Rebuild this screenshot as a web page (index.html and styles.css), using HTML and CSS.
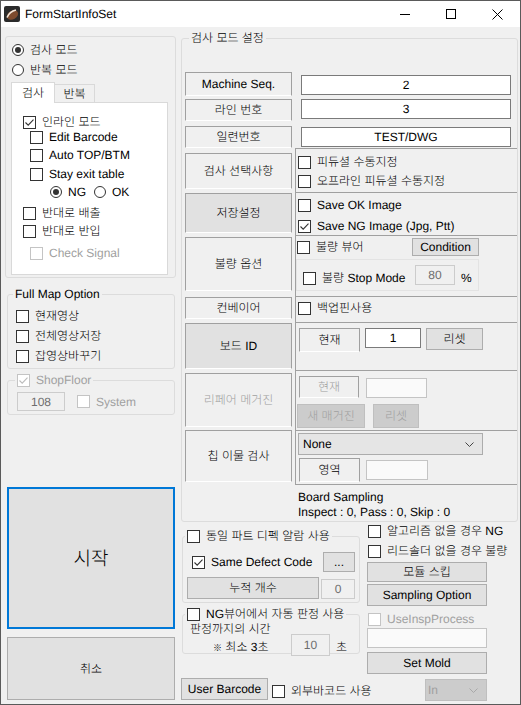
FILE: index.html
```html
<!DOCTYPE html>
<html lang="ko">
<head>
<meta charset="utf-8">
<title>FormStartInfoSet</title>
<link rel="stylesheet" href="styles.css">
</head>
<body>
<div class="window">
  <div class="titlebar">
    <svg class="appicon" viewBox="0 0 16 16"><rect x="0" y="0" width="16" height="16" rx="2" fill="#2b2b2b"/><ellipse cx="8.5" cy="9" rx="6" ry="4.3" fill="#7d4b2e" transform="rotate(-30 8.5 9)"/><path d="M3 11.5 Q5.5 5.5 12 4" stroke="#f3e7da" stroke-width="1.6" fill="none"/></svg>
    <span class="title">FormStartInfoSet</span>
    <div class="winctl">
      <span class="wbtn"><svg width="10" height="10" viewBox="0 0 10 10"><path d="M0 5.5H10" stroke="#000" stroke-width="1"/></svg></span>
      <span class="wbtn"><svg width="10" height="10" viewBox="0 0 10 10"><rect x="0.5" y="0.5" width="9" height="9" fill="none" stroke="#000" stroke-width="1"/></svg></span>
      <span class="wbtn"><svg width="11" height="11" viewBox="0 0 11 11"><path d="M0.5 0.5L10.5 10.5M10.5 0.5L0.5 10.5" stroke="#000" stroke-width="1"/></svg></span>
    </div>
  </div>

  <div class="client">
    <!-- LEFT COLUMN -->
    <div class="leftcol">
      <div class="modepanel">
        <div class="rd moderow first"><span class="circ on"></span><span>검사 모드</span></div>
        <div class="rd moderow"><span class="circ"></span><span>반복 모드</span></div>
        <div class="tabs">
          <div class="tab active">검사</div>
          <div class="tab">반복</div>
        </div>
        <div class="tabpage">
          <div class="cb tp-inline"><span class="box"><svg viewBox="0 0 11 11"><path d="M1.5 5.5L4.2 8.2L9.5 2.6" fill="none" stroke="#333" stroke-width="1.1"/></svg></span><span>인라인 모드</span></div>
          <div class="cb tp-edit"><span class="box"></span><span>Edit Barcode</span></div>
          <div class="cb tp-auto"><span class="box"></span><span>Auto TOP/BTM</span></div>
          <div class="cb tp-stay"><span class="box"></span><span>Stay exit table</span></div>
          <div class="tp-ngok">
            <div class="rd"><span class="circ on"></span><span>NG</span></div>
            <div class="rd ok"><span class="circ"></span><span>OK</span></div>
          </div>
          <div class="cb tp-out"><span class="box"></span><span>반대로 배출</span></div>
          <div class="cb tp-in"><span class="box"></span><span>반대로 반입</span></div>
          <div class="cb dis tp-sig"><span class="box"></span><span>Check Signal</span></div>
        </div>
      </div>

      <fieldset class="gb fullmap">
        <legend>Full Map Option</legend>
        <div class="cb fm fm1"><span class="box"></span><span>현재영상</span></div>
        <div class="cb fm fm2"><span class="box"></span><span>전체영상저장</span></div>
        <div class="cb fm fm2"><span class="box"></span><span>잡영상바꾸기</span></div>
      </fieldset>

      <fieldset class="gb shop">
        <legend><span class="cb dis"><span class="box"><svg viewBox="0 0 11 11"><path d="M1.5 5.5L4.2 8.2L9.5 2.6" fill="none" stroke="#bcbcbc" stroke-width="1.1"/></svg></span><span>ShopFloor</span></span></legend>
        <div class="shoprow">
          <div class="tb dis shoptb">108</div>
          <div class="cb dis systemcb"><span class="box"></span><span>System</span></div>
        </div>
      </fieldset>

      <div class="btn start">시작</div>
      <div class="btn cancel">취소</div>
    </div>

    <!-- RIGHT COLUMN -->
    <div class="rightcol">
      <fieldset class="gb main">
        <legend>검사 모드 설정</legend>

        <div class="trow r1">
          <div class="lbl l1">Machine Seq.</div>
          <div class="vplain"><div class="tb vtb v1">2</div></div>
        </div>
        <div class="trow r2">
          <div class="lbl l2">라인 번호</div>
          <div class="vplain"><div class="tb vtb v2">3</div></div>
        </div>
        <div class="trow r3">
          <div class="lbl l3">일련번호</div>
          <div class="vplain"><div class="tb vtb v3">TEST/DWG</div></div>
        </div>

        <div class="trow r4">
          <div class="lbl l4">검사 선택사항</div>
          <div class="vc">
            <div class="cb vcb r4a"><span class="box"></span><span>피듀셜 수동지정</span></div>
            <div class="cb vcb r4b"><span class="box"></span><span>오프라인 피듀셜 수동지정</span></div>
          </div>
        </div>

        <div class="trow r5">
          <div class="lbl raised l5">저장설정</div>
          <div class="vc">
            <div class="cb vcb r5a"><span class="box"></span><span>Save OK Image</span></div>
            <div class="cb vcb r5b"><span class="box"><svg viewBox="0 0 11 11"><path d="M1.5 5.5L4.2 8.2L9.5 2.6" fill="none" stroke="#333" stroke-width="1.1"/></svg></span><span>Save NG Image (Jpg, Ptt)</span></div>
          </div>
        </div>

        <div class="trow r6">
          <div class="lbl l6">불량 옵션</div>
          <div class="vc">
            <div class="r6top">
              <div class="cb"><span class="box"></span><span>불량 뷰어</span></div>
              <div class="btn cond">Condition</div>
            </div>
            <div class="stoppanel">
              <div class="cb stopcb"><span class="box"></span><span>불량 Stop Mode</span></div>
              <div class="tb dis pcttb">80</div>
              <span class="pct">%</span>
            </div>
          </div>
        </div>

        <div class="trow r7">
          <div class="lbl l7">컨베이어</div>
          <div class="vc">
            <div class="cb vcb r7a"><span class="box"></span><span>백업핀사용</span></div>
          </div>
        </div>

        <div class="trow r8">
          <div class="lbl raised l8">보드 ID</div>
          <div class="vc">
            <div class="r8row">
              <div class="lbl curlbl">현재</div>
              <div class="tb curtb">1</div>
              <div class="btn resetbtn">리셋</div>
            </div>
          </div>
        </div>

        <div class="trow r9">
          <div class="lbl dis l9">리페어 메거진</div>
          <div class="vc">
            <div class="r9row1">
              <div class="lbl dis mcurlbl">현재</div>
              <div class="tb empty mcurtb"></div>
            </div>
            <div class="r9row2">
              <div class="btn dis newmag">새 매거진</div>
              <div class="btn dis mreset">리셋</div>
            </div>
          </div>
        </div>

        <div class="trow r10">
          <div class="lbl l10">칩 이물 검사</div>
          <div class="vc">
            <div class="dd nonedd"><span>None</span><svg width="9" height="5" viewBox="0 0 9 5"><path d="M0.5 0.5L4.5 4.5L8.5 0.5" fill="none" stroke="#444" stroke-width="1"/></svg></div>
            <div class="r10row">
              <div class="lbl arealbl">영역</div>
              <div class="tb empty areatb"></div>
            </div>
          </div>
        </div>

        <div class="trow r11">
          <div></div>
          <div class="vsample">Board Sampling<br>Inspect : 0, Pass : 0, Skip : 0</div>
        </div>
      </fieldset>

      <div class="bottom">
        <div class="lsub">
          <fieldset class="gb fs-same">
            <legend><span class="cb"><span class="box"></span><span>동일 파트 디펙 알람 사용</span></span></legend>
            <div class="sdrow">
              <div class="cb sdcb"><span class="box"><svg viewBox="0 0 11 11"><path d="M1.5 5.5L4.2 8.2L9.5 2.6" fill="none" stroke="#333" stroke-width="1.1"/></svg></span><span>Same Defect Code</span></div>
              <div class="btn dots">...</div>
            </div>
            <div class="accrow">
              <div class="btn accbtn">누적 개수</div>
              <div class="tb dis acctb">0</div>
            </div>
          </fieldset>
          <fieldset class="gb fs-ng">
            <legend><span class="cb"><span class="box"></span><span>NG뷰어에서 자동 판정 사용</span></span></legend>
            <div class="judgetxt">판정까지의 시간</div>
            <div class="minrow">
              <span class="mintxt"><span class="kome">※</span> 최소 3초</span>
              <div class="tb dis sectb">10</div>
              <span class="sec">초</span>
            </div>
          </fieldset>
        </div>
        <div class="rsub">
          <div class="cb rs-alg"><span class="box"></span><span>알고리즘 없을 경우 NG</span></div>
          <div class="cb rs-lead"><span class="box"></span><span>리드솔더 없을 경우 불량</span></div>
          <div class="btn rs-skip">모듈 스킵</div>
          <div class="btn rs-samp">Sampling Option</div>
          <div class="cb dis rs-use"><span class="box"></span><span>UseInspProcess</span></div>
          <div class="tb empty rs-tb"></div>
          <div class="btn rs-mold">Set Mold</div>
        </div>
      </div>

      <div class="bottomrow">
        <div class="btn ubtn">User Barcode</div>
        <div class="cb extcb"><span class="box"></span><span>외부바코드 사용</span></div>
        <div class="dd dis indd"><span>In</span><svg width="9" height="5" viewBox="0 0 9 5"><path d="M0.5 0.5L4.5 4.5L8.5 0.5" fill="none" stroke="#a8a8a8" stroke-width="1"/></svg></div>
      </div>
    </div>
  </div>
</div>
</body>
</html>
```

FILE: styles.css
```css
* { box-sizing: border-box; }
html, body { margin: 0; padding: 0; }
body {
  width: 521px; height: 705px; overflow: hidden;
  background: #f0f0f0;
  font-family: "Liberation Sans", "Noto Sans CJK KR Light", "Noto Sans CJK KR", sans-serif;
  font-size: 12px; line-height: 14px; color: #000;
  text-rendering: geometricPrecision;
}
.window {
  width: 521px; height: 705px;
  border: 1px solid #5a5a5a;
  display: flex; flex-direction: column;
  background: #f0f0f0; overflow: hidden;
}
.titlebar { flex: none; height: 26px; background: #fff; display: flex; align-items: center; padding-left: 3px; }
.appicon { width: 16px; height: 16px; flex: none; }
.title { margin-left: 5px; }
.winctl { margin-left: auto; display: flex; height: 26px; }
.wbtn { width: 46px; height: 26px; display: flex; align-items: center; justify-content: center; }
.client { flex: 1; display: flex; align-items: flex-start; padding-left: 4px; }
.leftcol { flex: none; width: 171px; display: flex; flex-direction: column; }
.rightcol { flex: none; width: 337px; margin-left: 5px; display: flex; flex-direction: column; }

/* generic controls */
.gb { margin: 0; padding: 0; border: 1px solid #dcdcdc; border-radius: 3px; min-width: 0; flex: none; }
.gb > legend { padding: 0 2px; height: 14px; line-height: 14px; }
.cb { display: flex; align-items: center; height: 14px; white-space: nowrap; }
.box {
  flex: none; width: 13px; height: 13px; border: 1px solid #333; background: #fff;
  margin-right: 6px; display: flex; align-items: center; justify-content: center;
}
.box svg { width: 11px; height: 11px; display: block; }
.cb.dis { color: #a0a0a0; }
.cb.dis .box { border-color: #c4c4c4; }
.rd { display: flex; align-items: center; height: 14px; white-space: nowrap; }
.circ {
  flex: none; width: 12px; height: 12px; border: 1px solid #333; border-radius: 50%;
  background: #fff; margin-right: 6px; display: flex; align-items: center; justify-content: center;
}
.circ.on::after { content: ""; width: 6px; height: 6px; border-radius: 50%; background: #333; }
.btn {
  flex: none; background: #e1e1e1; border: 1px solid #adadad;
  display: flex; align-items: center; justify-content: center; white-space: nowrap;
}
.btn.dis { background: #cccccc; border-color: #bfbfbf; color: #a0a0a0; }
.tb {
  flex: none; background: #fff; border: 1px solid #7a7a7a;
  display: flex; align-items: center; justify-content: center;
}
.tb.dis { background: #f0f0f0; border-color: #cccccc; color: #6d6d6d; }
.tb.empty { background: #fafafa; border-color: #c4c4c4; }
.lbl {
  flex: none; border: 1px solid; border-color: #a0a0a0 #a0a0a0 #ffffff #a0a0a0;
  display: flex; align-items: center; justify-content: center; white-space: nowrap;
}
.lbl.raised { background: #e1e1e1; }
.lbl.dis { color: #a0a0a0; }
.dd {
  flex: none; display: flex; align-items: center; justify-content: space-between;
  background: #e5e5e5; border: 1px solid #acacac; padding: 0 8px 0 4px;
}
.dd.dis { background: #cccccc; border-color: #bfbfbf; color: #a0a0a0; padding: 0 8px 0 2px; }

/* left: mode panel */
.modepanel {
  flex: none; margin-top: 9px; height: 242px; border: 1px solid #dcdcdc; border-radius: 3px;
  display: flex; flex-direction: column;
}
.moderow { height: 20px; padding-left: 6px; }
.moderow.first { margin-top: 3px; }
.tabs { flex: none; display: flex; align-items: flex-end; margin-top: 2px; margin-left: 5px; height: 21px; position: relative; z-index: 1; }
.tab {
  width: 40px; height: 18px; margin-bottom: 1px; background: #f0f0f0;
  border: 1px solid #d9d9d9; border-left: none; border-bottom: none;
  display: flex; align-items: center; justify-content: center;
}
.tab.active { width: 44px; height: 21px; margin-bottom: 0; background: #fff; border-left: 1px solid #d9d9d9; }
.tabpage {
  flex: none; margin-left: 5px; margin-top: -1px; width: 157px; height: 173px;
  border: 1px solid #d9d9d9; background: #fff; display: flex; flex-direction: column;
}
.tp-inline { margin-top: 12px; padding-left: 11px; }
.tp-edit { margin-top: 1px; padding-left: 18px; }
.tp-auto { margin-top: 4px; padding-left: 18px; }
.tp-stay { margin-top: 5px; padding-left: 18px; }
.tp-ngok { margin-top: 4px; padding-left: 38px; display: flex; height: 14px; }
.tp-ngok .ok { margin-left: 8px; }
.tp-out { margin-top: 7px; padding-left: 11px; }
.tp-in { margin-top: 4px; padding-left: 11px; }
.tp-sig { margin-top: 8px; padding-left: 18px; }

/* left: group boxes */
.fullmap { margin-top: 9px; margin-left: 2px; width: 168px; height: 82px; }
.fullmap > legend { margin-left: 5px; }
.fm { padding-left: 8px; }
.fm1 { margin-top: 8px; }
.fm2 { margin-top: 6px; }
.shop { margin-top: 4px; margin-left: 2px; width: 168px; height: 42px; }
.shop > legend { margin-left: 7px; }
.shoprow { display: flex; align-items: center; margin-top: 5px; padding-left: 9px; height: 19px; }
.shoptb { width: 48px; height: 19px; }
.systemcb { margin-left: 12px; }
.start {
  margin-top: 72px; margin-left: 2px; width: 168px; height: 142px;
  border: 2px solid #0078d7; font-size: 19px; line-height: 22px;
  font-family: "Noto Sans CJK KR Light", "Noto Sans CJK KR", sans-serif;
}
.cancel { margin-top: 8px; margin-left: 2px; width: 168px; height: 63px; }

/* right: main group */
.main { margin-top: 4px; width: 337px; height: 491px; }
.main > legend { margin-left: 7px; }
.trow { display: grid; grid-template-columns: 107px 222px; column-gap: 3px; margin-left: 3px; }
.trow > .lbl { align-self: start; }
.vplain { display: flex; flex-direction: column; align-items: flex-start; }
.vtb { margin-left: 6px; width: 210px; }
.r1 { margin-top: 27px; height: 24px; }
.l1 { height: 24px; }
.v1 { margin-top: 3px; height: 20px; }
.r2 { margin-top: 2px; height: 24px; }
.l2 { margin-top: 1px; height: 22px; }
.v2 { margin-top: 1px; height: 20px; }
.r3 { margin-top: 2px; height: 24px; }
.l3 { margin-top: 2px; height: 22px; }
.v3 { margin-top: 3px; height: 20px; }
.vc {
  border-top: 1px solid #a0a0a0; border-left: 1px solid #a0a0a0;
  display: flex; flex-direction: column; align-items: flex-start;
}
.vcb { padding-left: 2px; }
.r4 { height: 44px; }
.l4 { margin-top: 5px; height: 36px; }
.r4a { margin-top: 6px; }
.r4b { margin-top: 5px; }
.r5 { height: 43px; }
.l5 { margin-top: 1px; height: 40px; }
.r5a { margin-top: 5px; }
.r5b { margin-top: 7px; }
.r6 { height: 61px; }
.l6 { margin-top: 2px; height: 54px; }
.r6top {
  margin-top: 2px; height: 18px; width: 183px; padding-left: 1px;
  display: flex; align-items: center; justify-content: space-between;
}
.cond { width: 67px; height: 18px; }
.stoppanel { margin-top: 3px; width: 183px; height: 32px; border: 1px solid #e3e3e3; display: flex; align-items: flex-start; }
.stopcb { margin-top: 11px; margin-left: 6px; width: 112px; }
.pcttb { margin-top: 5px; width: 40px; height: 20px; }
.pct { margin-top: 11px; margin-left: 6px; }
.r7 { height: 26px; }
.l7 { margin-top: 1px; height: 22px; }
.r7a { margin-top: 4px; }
.r8 { height: 48px; }
.l8 { margin-top: 1px; height: 46px; }
.r8row { margin-top: 5px; display: flex; align-items: flex-start; }
.curlbl { margin-left: 3px; width: 61px; height: 24px; }
.curtb { margin-left: 5px; width: 56px; height: 20px; }
.resetbtn { margin-left: 5px; width: 57px; height: 22px; }
.r9 { height: 60px; }
.l9 { margin-top: 3px; height: 54px; }
.r9row1 { margin-top: 5px; display: flex; align-items: flex-start; }
.mcurlbl { margin-left: 3px; width: 60px; height: 22px; }
.mcurtb { margin-left: 7px; margin-top: 2px; width: 61px; height: 20px; }
.r9row2 { margin-top: 6px; display: flex; align-items: flex-start; }
.newmag { margin-left: 1px; width: 68px; height: 24px; }
.mreset { margin-left: 8px; width: 46px; height: 24px; }
.r10 { height: 54px; }
.l10 { height: 52px; }
.nonedd { margin-top: 2px; margin-left: 2px; width: 185px; height: 22px; }
.r10row { margin-top: 3px; display: flex; align-items: flex-start; }
.arealbl { margin-left: 3px; width: 61px; height: 24px; }
.areatb { margin-left: 6px; margin-top: 2px; width: 62px; height: 20px; }
.vsample { border-top: 1px solid #a0a0a0; padding: 5px 0 0 3px; line-height: 15px; }

/* right: bottom area */
.bottom { display: grid; grid-template-columns: 179px 120px; column-gap: 7px; }
.lsub { display: flex; flex-direction: column; }
.fs-same { margin-top: 7px; margin-left: 1px; width: 178px; height: 74px; }
.fs-same > legend, .fs-ng > legend { margin-left: 2px; }
.sdrow { margin-top: 9px; height: 20px; display: flex; align-items: center; }
.sdcb { padding-left: 9px; width: 140px; }
.dots { width: 32px; height: 20px; }
.accrow { margin-top: 5px; display: flex; align-items: flex-start; }
.accbtn { margin-left: 4px; width: 132px; height: 22px; }
.acctb { margin-left: 2px; margin-top: 2px; width: 34px; height: 20px; }
.fs-ng { margin-top: 4px; margin-left: 1px; width: 178px; height: 47px; }
.judgetxt { margin-top: 1px; padding-left: 7px; }
.minrow { margin-top: -2px; display: flex; align-items: flex-start; }
.mintxt { flex: none; padding-left: 30px; width: 108px; margin-top: 6px; }
.kome { font-size: 9px; }
.sectb { width: 39px; height: 22px; }
.sec { margin-left: 6px; margin-top: 6px; }
.rsub { display: flex; flex-direction: column; }
.rs-alg { margin-top: 2px; padding-left: 1px; }
.rs-lead { margin-top: 6px; padding-left: 1px; }
.rs-skip { margin-top: 4px; width: 120px; height: 20px; }
.rs-samp { margin-top: 2px; width: 120px; height: 22px; }
.rs-use { margin-top: 6px; padding-left: 1px; }
.rs-tb { margin-top: 2px; width: 120px; height: 20px; }
.rs-mold { margin-top: 4px; width: 120px; height: 22px; }
.bottomrow { margin-top: 4px; display: flex; align-items: flex-start; }
.ubtn { width: 87px; height: 22px; }
.extcb { margin-left: 4px; margin-top: 6px; width: 153px; }
.indd { margin-top: 1px; width: 62px; height: 22px; }
```
